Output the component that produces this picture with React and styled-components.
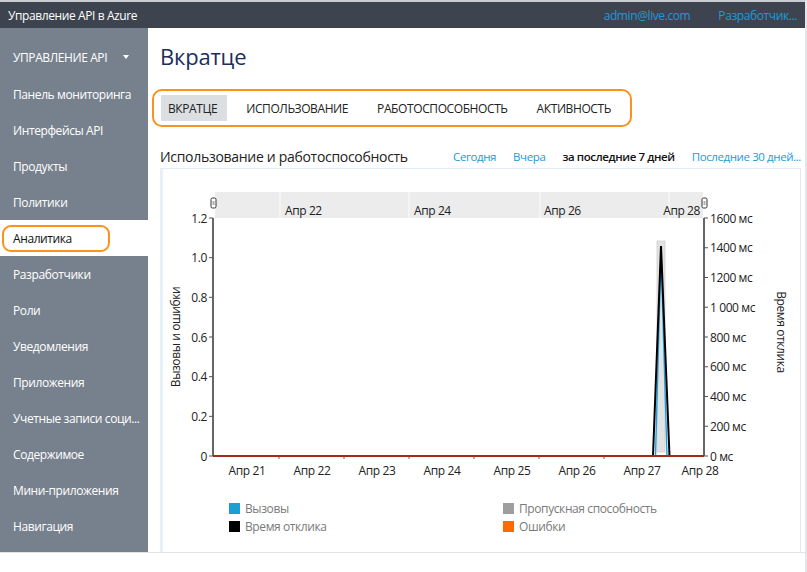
import React from "react";
import styled, { createGlobalStyle } from "styled-components";

const GlobalStyle = createGlobalStyle`
	html, body {
		margin: 0;
		padding: 0;
		background: #fff;
		font-family: "Open Sans", "Noto Sans", "DejaVu Sans", sans-serif;
		letter-spacing: -0.4px;
	}
`;

const menu = [
	"Панель мониторинга",
	"Интерфейсы API",
	"Продукты",
	"Политики",
	"Аналитика",
	"Разработчики",
	"Роли",
	"Уведомления",
	"Приложения",
	"Учетные записи соци...",
	"Содержимое",
	"Мини-приложения",
	"Навигация",
];

const tabs = ["ВКРАТЦЕ", "ИСПОЛЬЗОВАНИЕ", "РАБОТОСПОСОБНОСТЬ", "АКТИВНОСТЬ"];

const leftTicks = ["1.2", "1.0", "0.8", "0.6", "0.4", "0.2", "0"];
const rightTicks = ["1600 мс", "1400 мс", "1200 мс", "1 000 мс", "800 мс", "600 мс", "400 мс", "200 мс", "0 мс"];
const bottomLabels = [
	["Апр 21", 247],
	["Апр 22", 312],
	["Апр 23", 377],
	["Апр 24", 442],
	["Апр 25", 512],
	["Апр 26", 577],
	["Апр 27", 642],
	["Апр 28", 700],
];

function Handle({ x, y }) {
	return (
		<g>
			<rect x={x} y={y} width="5" height="10" rx="1.5" fill="#fff" stroke="#333" strokeWidth="1" />
			<line x1={x + 1.5} y1={y + 4} x2={x + 3.5} y2={y + 4} stroke="#333" strokeWidth="0.8" />
			<line x1={x + 1.5} y1={y + 6} x2={x + 3.5} y2={y + 6} stroke="#333" strokeWidth="0.8" />
		</g>
	);
}

function Chart() {
	const top = 218;
	const bottom = 456;
	const lStep = (bottom - top) / 6;
	const rStep = (bottom - top) / 8;
	return (
		<ChartSvg width="636" height="310" viewBox="0 0 636 310">
			<g transform="translate(-163,-169)" fontFamily='"Open Sans", "Noto Sans", sans-serif'>
				<rect x="215" y="192" width="488" height="26" fill="#ececec" />
				{[280, 409, 540, 669].map((x) => (
					<line key={x} x1={x} y1="192" x2={x} y2="218" stroke="#f7f7f7" strokeWidth="1.5" />
				))}
				<g fontSize="12" fill="#222">
					<text x="285" y="215">Апр 22</text>
					<text x="414" y="215">Апр 24</text>
					<text x="544" y="215">Апр 26</text>
					<text x="700" y="215" textAnchor="end">Апр 28</text>
				</g>
				<Handle x={211} y={198} />
				<Handle x={702} y={198} />

				<line x1="213" y1={top} x2="213" y2={bottom} stroke="#333" strokeWidth="1.5" />
				<line x1="704" y1={top} x2="704" y2={bottom} stroke="#333" strokeWidth="1.5" />
				{leftTicks.map((t, i) => (
					<g key={t}>
						<line x1="209" y1={top + i * lStep} x2="213" y2={top + i * lStep} stroke="#555" strokeWidth="1" />
						<text x="207" y={top + i * lStep + 4.5} fontSize="12" textAnchor="end" fill="#222">
							{t}
						</text>
					</g>
				))}
				{rightTicks.map((t, i) => (
					<g key={t}>
						<line x1="704" y1={top + i * rStep} x2="708" y2={top + i * rStep} stroke="#555" strokeWidth="1" />
						<text x="710" y={top + i * rStep + 4.5} fontSize="12" fill="#222">
							{t}
						</text>
					</g>
				))}
				<text
					x="0"
					y="0"
					fontSize="12"
					fill="#222"
					textAnchor="middle"
					transform="translate(180,337) rotate(-90)"
				>
					Вызовы и ошибки
				</text>
				<text
					x="0"
					y="0"
					fontSize="12"
					fill="#222"
					textAnchor="middle"
					transform="translate(777,332) rotate(90)"
				>
					Время отклика
				</text>

				{[279, 344, 409, 474, 539, 604].map((x) => (
					<line key={x} x1={x} y1={bottom} x2={x} y2={bottom + 3} stroke="#777" strokeWidth="1.2" />
				))}
				{bottomLabels.map(([t, x]) => (
					<text key={t} x={x} y="475" fontSize="12" textAnchor="middle" fill="#222">
						{t}
					</text>
				))}

				<rect x="657" y="241" width="8" height="211" fill="#e2e2e2" stroke="#d0d0d0" strokeWidth="0.8" />
				<polyline points="655.5,456 661,252 667,456" fill="none" stroke="#1ba1e2" strokeWidth="1.4" />
				<polyline points="653,456 661,246 669.5,456" fill="none" stroke="#000" strokeWidth="2" />
				<line x1="213" y1={bottom} x2="704" y2={bottom} stroke="#a8281c" strokeWidth="2" />
			</g>
		</ChartSvg>
	);
}

export default function App() {
	return (
		<>
			<GlobalStyle />
			<Page>
				<TopBar>
					<Brand>Управление API в Azure</Brand>
					<TopLinks>
						<TopLink>admin@live.com</TopLink>
						<TopLink>Разработчик...</TopLink>
					</TopLinks>
				</TopBar>
				<Body>
					<Sidebar>
						<SideHeader>
							УПРАВЛЕНИЕ API
							<Caret />
						</SideHeader>
						{menu.map((m) => (
							<SideItem key={m} active={m === "Аналитика"}>
								{m === "Аналитика" ? <Highlight>{m}</Highlight> : m}
							</SideItem>
						))}
					</Sidebar>
					<Main>
						<Title>Вкратце</Title>
						<TabBox>
							{tabs.map((t, i) => (
								<Tab key={t} active={i === 0}>
									{t}
								</Tab>
							))}
						</TabBox>
						<SectionRow>
							<SectionTitle>Использование и работоспособность</SectionTitle>
							<Ranges>
								<RangeLink>Сегодня</RangeLink>
								<RangeLink>Вчера</RangeLink>
								<RangeLink current>за последние 7 дней</RangeLink>
								<RangeLink>Последние 30 дней...</RangeLink>
							</Ranges>
						</SectionRow>
						<Panel>
							<Chart />
							<Legend>
								<LegendItem>
									<Swatch color="#1a9fd5" />
									Вызовы
								</LegendItem>
								<LegendItem>
									<Swatch color="#9e9e9e" />
									Пропускная способность
								</LegendItem>
								<LegendItem>
									<Swatch color="#000" />
									Время отклика
								</LegendItem>
								<LegendItem>
									<Swatch color="#ff6a00" />
									Ошибки
								</LegendItem>
							</Legend>
						</Panel>
					</Main>
				</Body>
			</Page>
		</>
	);
}

const Page = styled.div`
	width: 807px;
	height: 572px;
	overflow: hidden;
	display: flex;
	flex-direction: column;
	border-right: 2px solid #e4e6e8;
	box-sizing: border-box;
`;

const TopBar = styled.div`
	height: 28px;
	flex: none;
	background: #3d4450;
	border-top: 2px solid #c9ccd0;
	box-sizing: border-box;
	display: flex;
	align-items: center;
	justify-content: space-between;
	padding: 0 8px 0 8px;
`;

const Brand = styled.div`
	color: #fff;
	font-size: 12px;
`;

const TopLinks = styled.div`
	display: flex;
	gap: 28px;
`;

const TopLink = styled.span`
	color: #1c9ad6;
	font-size: 12px;
`;

const Body = styled.div`
	display: flex;
	flex: none;
	height: 524px;
	border-bottom: 1px solid #e1e3e5;
`;

const Sidebar = styled.div`
	width: 148px;
	flex: none;
	background: #77818d;
	display: flex;
	flex-direction: column;
`;

const SideHeader = styled.div`
	height: 22px;
	margin: 18px 0 8px;
	padding-left: 13px;
	display: flex;
	align-items: center;
	color: #fff;
	font-size: 12px;
`;

const Caret = styled.span`
	margin-left: 16px;
	width: 0;
	height: 0;
	border-left: 3.5px solid transparent;
	border-right: 3.5px solid transparent;
	border-top: 4px solid #fff;
`;

const SideItem = styled.div`
	height: 36px;
	display: flex;
	align-items: center;
	padding-left: ${(p) => (p.active ? "2px" : "13px")};
	color: ${(p) => (p.active ? "#111" : "#fff")};
	background: ${(p) => (p.active ? "#fff" : "transparent")};
	font-size: 12px;
	white-space: nowrap;
`;

const Highlight = styled.span`
	display: flex;
	align-items: center;
	width: 108px;
	height: 27px;
	box-sizing: border-box;
	padding-left: 9px;
	border: 2px solid #f7931e;
	border-radius: 9px;
`;

const Main = styled.div`
	flex: 1;
	padding: 0 4px 0 12px;
	display: flex;
	flex-direction: column;
	min-width: 0;
`;

const Title = styled.h1`
	margin: 13px 0 0;
	height: 30px;
	font-size: 22px;
	font-weight: 400;
	color: #1d2e5b;
	line-height: 30px;
	letter-spacing: -0.2px;
`;

const TabBox = styled.div`
	margin: 18px 0 0 -8px;
	width: 480px;
	height: 38px;
	box-sizing: border-box;
	border: 2px solid #f7931e;
	border-radius: 10px;
	padding: 4px 7px;
	display: flex;
	align-items: center;
	gap: 12px;
`;

const Tab = styled.div`
	height: 26px;
	display: flex;
	align-items: center;
	padding: 0 10px 0 7px;
	background: ${(p) => (p.active ? "#dcdfe2" : "transparent")};
	color: #222;
	font-size: 12px;
`;

const SectionRow = styled.div`
	margin-top: 17px;
	height: 24px;
	display: flex;
	align-items: center;
	justify-content: space-between;
`;

const SectionTitle = styled.div`
	font-size: 14px;
	color: #222;
	letter-spacing: -0.3px;
`;

const Ranges = styled.div`
	display: flex;
	gap: 17px;
	font-size: 11.5px;
`;

const RangeLink = styled.span`
	color: ${(p) => (p.current ? "#111" : "#1c9ad6")};
	font-weight: ${(p) => (p.current ? 600 : 400)};
	white-space: nowrap;
`;

const Panel = styled.div`
	flex: 1;
	border: 1px solid #dfecf2;
	border-left: 3px solid #e5f1f7;
	border-bottom: none;
	display: flex;
	flex-direction: column;
`;

const ChartSvg = styled.svg`
	display: block;
	flex: none;
`;

const Legend = styled.div`
	margin-top: 20px;
	padding-left: 66px;
	display: grid;
	grid-template-columns: 274px 1fr;
`;

const LegendItem = styled.div`
	height: 18px;
	display: flex;
	align-items: center;
	gap: 5px;
	font-size: 12px;
	color: #7a7a7a;
`;

const Swatch = styled.span`
	width: 11px;
	height: 11px;
	background: ${(p) => p.color};
	flex: none;
`;
